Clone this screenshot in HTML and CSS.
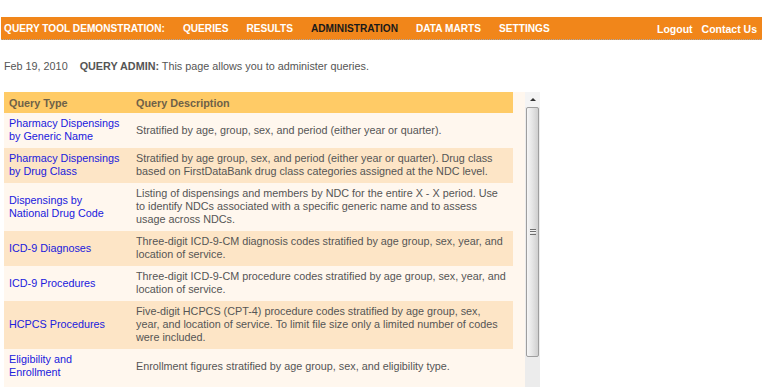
FILE: index.html
```html
<!DOCTYPE html>
<html lang="en">
<head>
<meta charset="utf-8">
<title>Query Tool Demonstration - Administration</title>
<link rel="stylesheet" href="styles.css">
</head>
<body>
<div class="page">
  <header class="topbar">
    <nav class="nav-main">
      <span class="brand">QUERY TOOL DEMONSTRATION:</span>
      <a href="#">QUERIES</a>
      <a href="#">RESULTS</a>
      <a href="#" class="active">ADMINISTRATION</a>
      <a href="#">DATA MARTS</a>
      <a href="#">SETTINGS</a>
    </nav>
    <nav class="nav-util">
      <a href="#">Logout</a>
      <a href="#">Contact Us</a>
    </nav>
  </header>

  <p class="status"><span class="date">Feb 19, 2010</span><strong>QUERY ADMIN:</strong> This page allows you to administer queries.</p>

  <div class="panel">
    <div class="viewport">
      <table class="queries">
        <thead>
          <tr><th class="c-type">Query Type</th><th class="c-desc">Query Description</th></tr>
        </thead>
        <tbody>
          <tr><td class="c-type"><a href="#">Pharmacy Dispensings by Generic Name</a></td><td class="c-desc">Stratified by age, group, sex, and period (either year or quarter).</td></tr>
          <tr class="alt"><td class="c-type"><a href="#">Pharmacy Dispensings by Drug Class</a></td><td class="c-desc">Stratified by age group, sex, and period (either year or quarter). Drug class based on FirstDataBank drug class categories assigned at the NDC level.</td></tr>
          <tr><td class="c-type"><a href="#">Dispensings by National Drug Code</a></td><td class="c-desc">Listing of dispensings and members by NDC for the entire X - X period. Use to identify NDCs associated with a specific generic name and to assess usage across NDCs.</td></tr>
          <tr class="alt"><td class="c-type"><a href="#">ICD-9 Diagnoses</a></td><td class="c-desc">Three-digit ICD-9-CM diagnosis codes stratified by age group, sex, year, and location of service.</td></tr>
          <tr><td class="c-type"><a href="#">ICD-9 Procedures</a></td><td class="c-desc">Three-digit ICD-9-CM procedure codes stratified by age group, sex, year, and location of service.</td></tr>
          <tr class="alt"><td class="c-type"><a href="#">HCPCS Procedures</a></td><td class="c-desc">Five-digit HCPCS (CPT-4) procedure codes stratified by age group, sex, year, and location of service. To limit file size only a limited number of codes were included.</td></tr>
          <tr><td class="c-type"><a href="#">Eligibility and Enrollment</a></td><td class="c-desc">Enrollment figures stratified by age group, sex, and eligibility type.</td></tr>
        </tbody>
      </table>
    </div>
    <div class="scrollbar" aria-hidden="true">
      <div class="sb-up"><span class="sb-arrow"></span></div>
      <div class="sb-thumb"><span class="sb-grip"></span></div>
      <div class="sb-track"></div>
    </div>
  </div>
</div>
</body>
</html>
```
FILE: styles.css
```css
html, body {
  margin: 0;
  padding: 0;
  background: #ffffff;
  overflow: hidden;
}

body {
  font-family: "Liberation Sans", Arial, sans-serif;
  font-size: 10.8px;
  color: #555555;
}

.page {
  padding-top: 17px;
}

/* ---------- top bar ---------- */
.topbar {
  display: flex;
  align-items: center;
  box-sizing: border-box;
  height: 23px;
  margin: 0 3px 0 1px;
  padding: 1px 5px 0 3px;
  background: #f1861a;
  border-bottom: 1px dotted #a8a8a8;
  font-size: 10.15px;
  font-weight: bold;
  color: #ffffff;
}

.nav-main {
  display: flex;
  gap: 18px;
}

.nav-main a,
.nav-util a {
  color: #ffffff;
  text-decoration: none;
}

.nav-main a.active {
  color: #1a1a1a;
}

.nav-util {
  display: flex;
  gap: 9px;
  margin-left: auto;
  font-size: 10.5px;
}

/* ---------- status line ---------- */
.status {
  margin: 20px 0 0 4px;
  line-height: 13px;
  color: #555555;
}

.status .date {
  margin-right: 12px;
}

.status strong {
  color: #555555;
}

/* ---------- panel with scroll ---------- */
.panel {
  display: flex;
  width: 536px;
  height: 320px;
  margin: 19px 0 0 4px;
  background: #fff7ee;
}

.viewport {
  width: 509px;
  overflow: hidden;
  margin-right: 12px;
}

.queries {
  width: 509px;
  border-collapse: collapse;
  table-layout: fixed;
}

.queries th {
  height: 21px;
  padding: 0 5px;
  background: #ffcb66;
  color: #6e6148;
  font-weight: bold;
  text-align: left;
  vertical-align: middle;
}

.queries td {
  padding: 4px 5px 5px 5px;
  line-height: 13px;
  vertical-align: middle;
  background: #fff7ee;
}

.queries tr.alt td {
  background: #fde5c6;
}

.queries .c-type {
  width: 113px;
  padding-right: 9px;
}

.queries .c-desc {
  padding-right: 7px;
}

.queries td a {
  color: #2020dd;
  text-decoration: none;
}

/* ---------- scrollbar ---------- */
.scrollbar {
  display: flex;
  flex-direction: column;
  width: 15px;
  background: #ececec;
}

.sb-up {
  display: flex;
  align-items: center;
  justify-content: center;
  height: 15px;
  background: #f4f4f4;
}

.sb-arrow {
  width: 0;
  height: 0;
  border-left: 3px solid transparent;
  border-right: 3px solid transparent;
  border-bottom: 3px solid #333333;
}

.sb-thumb {
  display: flex;
  align-items: center;
  justify-content: center;
  height: 248px;
  margin: 0 1px 0 1px;
  border: 1px solid #9e9e9e;
  border-radius: 2px;
  background: linear-gradient(to right, #f6f6f6 0%, #e6e6e6 45%, #cfcfcf 100%);
}

.sb-grip {
  width: 6px;
  height: 6px;
  background: repeating-linear-gradient(to bottom, #6f6f6f 0, #6f6f6f 1px, #f2f2f2 1px, #f2f2f2 2px, transparent 2px, transparent 2.5px);
}

.sb-track {
  flex: 1;
  background: #ececec;
}
```
